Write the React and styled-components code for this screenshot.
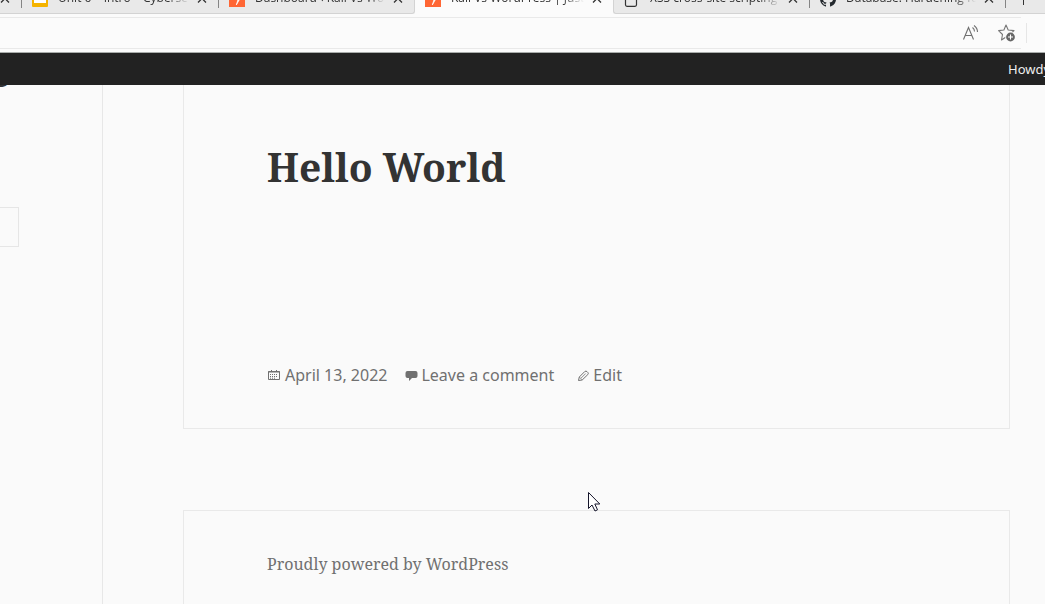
import React from "react";
import styled, { createGlobalStyle } from "styled-components";

const Global = createGlobalStyle`
  * { box-sizing: border-box; }
  body { margin: 0; background: #fafafa; font-family: "Noto Sans", "Open Sans", sans-serif; overflow: hidden; }
  button, input { font: inherit; margin: 0; }
`;

const SERIF = '"Noto Serif", "DejaVu Serif Condensed", "DejaVu Serif", serif';

const Page = styled.div`
  display: flex;
  flex-direction: column;
  height: 100vh;
  overflow: hidden;
  background: #fafafa;
`;

const TabStrip = styled.nav`
  display: flex;
  align-items: flex-end;
  flex: none;
  height: 14px;
  overflow: hidden;
  background: #fbfbfb;
`;

const TabGroup = styled.div`
  display: flex;
  flex: ${(p) => (p.$grow ? "1 0 auto" : "none")};
  height: 40px;
  background: ${(p) => (p.$active ? "#fbfbfb" : "#e9e9e9")};
  border: 0 solid #d3d3d3;
  border-bottom-width: ${(p) => (p.$active ? "0" : "1px")};
  border-right-width: ${(p) => (p.$edge === "right" ? "1px" : "0")};
  border-left-width: ${(p) => (p.$edge === "left" ? "1px" : "0")};
  border-radius: ${(p) => (p.$edge === "right" ? "0 0 3px 0" : p.$edge === "left" ? "0 0 0 3px" : "0")};
`;

const Tab = styled.div`
  display: flex;
  align-items: center;
  flex: none;
  gap: 8px;
  width: ${(p) => p.$width}px;
  padding: 12px 11px 0 10px;
  height: 38px;
`;

const EdgeTab = styled(Tab)`
  padding-left: 0;
`;

const Separator = styled.span`
  flex: none;
  width: 1px;
  height: 16px;
  margin-top: 18px;
  background: #858585;
`;

const TabLink = styled.a`
  display: flex;
  align-items: center;
  flex: 1;
  min-width: 0;
  gap: 10px;
  color: #333;
  font-family: "Open Sans", "Noto Sans", sans-serif;
  font-size: 12px;
  line-height: 16px;
  text-decoration: none;
`;

const TabTitle = styled.span`
  flex: 1;
  padding-bottom: 2px;
  overflow: hidden;
  white-space: nowrap;
  mask-image: linear-gradient(to right, #000 84%, transparent);
`;

const IconButton = styled.button`
  display: flex;
  flex: none;
  padding: 0;
  border: 0;
  background: none;
  color: #333;
`;

const Toolbar = styled.div`
  display: flex;
  align-items: center;
  flex: none;
  height: 39px;
  padding: 3px 0 4px;
  background: #fbfbfb;
  border-bottom: 1px solid #a9adab;
`;

const AddressBar = styled.div`
  display: flex;
  align-items: center;
  flex: 1;
  height: 32px;
  gap: 18px;
  padding-right: 5px;
  border-top: 1px solid #e9e9e9;
  border-bottom: 1px solid #e9e9e9;
`;

const AddressInput = styled.input`
  flex: 1;
  min-width: 0;
  border: 0;
  outline: 0;
  background: transparent;
`;

const ToolbarRule = styled.span`
  width: 1px;
  height: 20px;
  margin: 0 18px 0 5px;
  background: #e6e6e6;
`;

const AdminBar = styled.header`
  display: flex;
  justify-content: flex-end;
  flex: none;
  height: 32px;
  background: #222;
`;

const Account = styled.a`
  width: 37px;
  overflow: hidden;
  color: #eee;
  font-size: 13px;
  line-height: 32px;
  white-space: nowrap;
  text-decoration: none;
`;

const Body = styled.div`
  display: flex;
  flex: 1;
  min-height: 0;
`;

const Sidebar = styled.aside`
  flex: none;
  width: 103px;
  overflow: hidden;
  border-right: 1px solid #e7e7e7;
`;

const SiteTitle = styled.p`
  width: 10px;
  height: 32px;
  margin: -30px 0 120px;
  direction: rtl;
  color: #333;
  font-size: 27px;
  font-weight: 700;
  line-height: 32px;
`;

const SearchInput = styled.input`
  display: block;
  width: 19px;
  height: 40px;
  padding: 0;
  border: 1px solid #e6e6e6;
  border-left: 0;
  border-radius: 0;
  background: #fafafa;
`;

const Main = styled.main`
  display: flex;
  flex-direction: column;
  flex: 1;
  gap: 81px;
  min-width: 0;
  padding: 0 35px 0 80px;
`;

const Article = styled.article`
  padding: 53px 83px 38px;
  border: 1px solid #e9e9e9;
  border-top: 0;
`;

const Title = styled.h1`
  margin: 0 0 165px;
  color: #333;
  font-family: ${SERIF};
  font-size: 39px;
  font-weight: 700;
  line-height: 58px;
`;

const Meta = styled.footer`
  display: flex;
  align-items: center;
`;

const MetaLink = styled.a`
  display: flex;
  align-items: center;
  gap: 3px;
  margin-right: ${(p) => p.$after || 0}px;
  color: #707070;
  font-family: "Noto Sans", "Open Sans", sans-serif;
  font-size: 16px;
  line-height: 29px;
  text-decoration: none;
  white-space: nowrap;
`;

const SiteFooter = styled.footer`
  flex: 1;
  padding: 40px 83px;
  border: 1px solid #e9e9e9;
  border-bottom: 0;
`;

const Credit = styled.a`
  color: #707070;
  font-family: ${SERIF};
  font-size: 16px;
  line-height: 26px;
  text-decoration: none;
`;

const Pointer = styled.svg`
  position: absolute;
  left: 588px;
  top: 491px;
  pointer-events: none;
`;

const Glyph = styled.svg`
  flex: none;
`;

const Icon = ({ kind }) => (
  <Glyph width="16" height="16" viewBox="0 0 16 16" aria-hidden="true">
    {kind === "slides" && (
      <>
        <rect width="16" height="16" rx="1" fill="#f5b400" />
        <rect x="2" y="4" width="12" height="8" fill="#fff" />
      </>
    )}
    {kind === "bolt" && (
      <>
        <rect width="16" height="16" fill="#ff6634" />
        <path d="M8 3 6 8.500h3L7.300 14 10.800 8H8.500z" fill="#fff" stroke="#fff" strokeWidth=".7" />
      </>
    )}
    {kind === "page" && <rect x="1.500" y="1" width="11" height="14.300" rx="1.500" fill="none" stroke="#333" strokeWidth="1.200" />}
    {kind === "github" && (
      <path
        fill="#24292e"
        d="M8 0C3.580 0 0 3.580 0 8c0 3.540 2.290 6.530 5.470 7.590.4.070.55-.17.55-.38v-1.490c-2.010.37-2.530-.49-2.690-.94-.09-.23-.48-.94-.82-1.130-.28-.15-.68-.52-.01-.53.63-.01 1.080.58 1.230.82.72 1.210 1.870.87 2.330.66.07-.52.28-.87.51-1.070-1.780-.2-3.640-.89-3.640-3.950 0-.87.31-1.590.82-2.150-.08-.2-.36-1.020.08-2.120 0 0 .67-.21 2.200.82a7.600 7.600 0 0 1 4 0c1.530-1.040 2.200-.82 2.200-.82.44 1.100.16 1.920.08 2.120.51.56.82 1.270.82 2.150 0 3.070-1.870 3.750-3.650 3.950.29.25.54.73.54 1.480v2.200c0 .21.15.46.55.38A8 8 0 0 0 8 0z"
      />
    )}
  </Glyph>
);

const Close = () => (
  <IconButton aria-label="Close tab">
    <svg width="10" height="10" viewBox="0 0 10 10" stroke="currentColor" strokeWidth="1.300">
      <path d="m1 .5 8 8M9 .5l-8 8" />
    </svg>
  </IconButton>
);

const BrowserTab = ({ icon, title, width }) => (
  <Tab $width={width}>
    <TabLink href="#">
      <Icon kind={icon} />
      <TabTitle>{title}</TabTitle>
    </TabLink>
    <Close />
  </Tab>
);

export default function App() {
  return (
    <>
      <Global />
      <Page>
        <TabStrip>
          <TabGroup $edge="right">
            <EdgeTab $width={21}><Close /></EdgeTab>
            <Separator />
            <BrowserTab width={196} icon="slides" title="Unit 6 – Intro – Cybersecu" />
            <Separator />
            <BrowserTab width={195} icon="bolt" title="Dashboard ‹ Kali Vs WordP" />
          </TabGroup>
          <TabGroup $active>
            <BrowserTab width={198} icon="bolt" title="Kali Vs WordPress | Just an" />
          </TabGroup>
          <TabGroup $edge="left" $grow>
            <BrowserTab width={195} icon="page" title="XSS cross-site scripting att" />
            <Separator />
            <BrowserTab width={195} icon="github" title="Database: Hardening for" />
            <Separator />
            <Tab $width={39}>
              <IconButton aria-label="New tab">
                <svg width="14" height="14" viewBox="0 0 14 14" stroke="currentColor">
                  <path d="M7.500 1v12M1 7h13" />
                </svg>
              </IconButton>
            </Tab>
          </TabGroup>
        </TabStrip>

        <Toolbar>
          <AddressBar>
            <AddressInput aria-label="Address" />
            <IconButton aria-label="Read aloud">
              <svg width="18" height="18" viewBox="0 0 18 18" fill="none" stroke="#707070" strokeWidth="1.100">
                <path d="M1.500 15.500 6.500 3.500 11.500 15.500M3.300 11.500h6.500M10.500 3.500q2 1.500 2 4M12 1.500q3.500 2.500 3.500 6.500" />
              </svg>
            </IconButton>
            <IconButton aria-label="Add to favourites">
              <svg width="18" height="18" viewBox="0 0 18 18" fill="none" stroke="#777" strokeWidth="1.100">
                <path d="M8 1 10.200 6 16 6.600 12 10.500 13 15.500 8 13 3.500 16 4.500 10.500.6 6.600 5.900 6z" strokeLinejoin="round" />
                <circle cx="12.500" cy="13" r="5.300" fill="#fbfbfb" stroke="none" />
                <circle cx="12.500" cy="13" r="4.400" fill="#666" stroke="none" />
                <path d="M10 13h5M12.500 10.500v5" stroke="#fff" />
              </svg>
            </IconButton>
          </AddressBar>
          <ToolbarRule />
        </Toolbar>

        <AdminBar><Account href="#">Howdy</Account></AdminBar>

        <Body>
          <Sidebar>
            <SiteTitle>g</SiteTitle>
            <SearchInput type="search" aria-label="Search" />
          </Sidebar>
          <Main>
            <Article>
              <Title>Hello World</Title>
              <Meta>
                <MetaLink href="#" $after={18}>
                  <svg width="15" height="16" viewBox="0 0 15 16" fill="none" stroke="#707070">
                    <path d="M1.500 3.500h11v8h-11zM1 4h12" />
                    <path d="M4.500 2v2M9.500 2v2" />
                    <path d="M3 6.500h8M3 8.500h8M3 10.200h6" strokeDasharray="1 1" />
                  </svg>
                  April 13, 2022
                </MetaLink>
                <MetaLink href="#" $after={22}>
                  <svg width="13" height="16" viewBox="0 0 13 16" fill="#707070">
                    <path d="M2 3h8.500q2 0 2 2v3q0 2-2 2H7l-3 3v-3H2.500q-2 0-2-2V5q0-2 2-2z" />
                  </svg>
                  Leave a comment
                </MetaLink>
                <MetaLink href="#">
                  <svg width="14" height="16" viewBox="0 0 14 16" fill="none" stroke="#707070">
                    <path d="m2.500 12.500.8-3.500 5.500-5.500q1.200-.9 2.300.2l.7.7q1 1.200 0 2.200L6.200 12z" />
                    <path d="m5.200 10 4.500-4.500M3.500 9.200l2.600 2.600" strokeWidth=".8" />
                  </svg>
                  Edit
                </MetaLink>
              </Meta>
            </Article>
            <SiteFooter>
              <Credit href="#">Proudly powered by WordPress</Credit>
            </SiteFooter>
          </Main>
        </Body>
        <Pointer width="14" height="22" viewBox="0 0 14 22" aria-hidden="true">
          <path d="M.5 1.500v16l3.500-3.500 3 6 2.500-1.200-2.700-5.800h5z" fill="#fff" stroke="#15152a" />
        </Pointer>
      </Page>
    </>
  );
}
